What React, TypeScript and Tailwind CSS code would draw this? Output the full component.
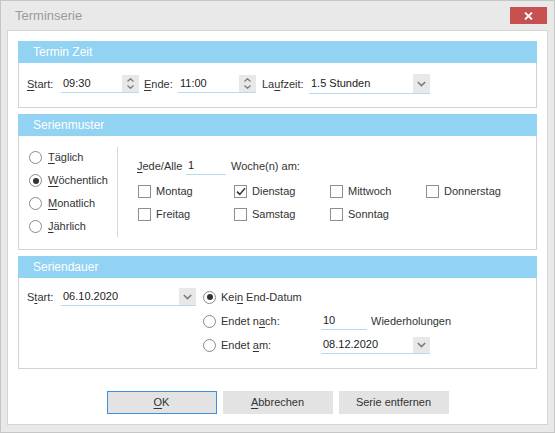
import { ReactNode } from 'react';

const font = "font-['Liberation_Sans',Arial,sans-serif]";

function Key({ children }: { children: ReactNode }) {
  return <span className="underline underline-offset-2">{children}</span>;
}

function SpinUpDown() {
  return (
    <div className="w-[17px] h-full bg-[#e8e8e8] flex flex-col items-center justify-center gap-[3px]">
      <svg width="7" height="4" viewBox="0 0 7 4">
        <path d="M0.5 3.5 L3.5 0.7 L6.5 3.5" fill="none" stroke="#7a7a7a" strokeWidth="1.2" />
      </svg>
      <svg width="7" height="4" viewBox="0 0 7 4">
        <path d="M0.5 0.5 L3.5 3.3 L6.5 0.5" fill="none" stroke="#7a7a7a" strokeWidth="1.2" />
      </svg>
    </div>
  );
}

function DropArrow() {
  return (
    <div className="w-[17px] h-full bg-[#e8e8e8] flex items-center justify-center">
      <svg width="9" height="6" viewBox="0 0 9 6">
        <path d="M0.8 1 L4.5 4.6 L8.2 1" fill="none" stroke="#7a7a7a" strokeWidth="1.5" />
      </svg>
    </div>
  );
}

function Field({ value, width, height = 'h-[18px]', right }: { value: string; width: string; height?: string; right?: ReactNode }) {
  return (
    <div className={`${width} ${height} flex items-stretch border-b border-[#b5dbef]`}>
      <span className="flex-1 pl-[2px] flex items-center text-[#222]">{value}</span>
      {right}
    </div>
  );
}

function Radio({ checked }: { checked?: boolean }) {
  return (
    <span className="w-[13px] h-[13px] rounded-full border border-[#8a8a8a] bg-white flex items-center justify-center shrink-0">
      {checked && <span className="w-[6px] h-[6px] rounded-full bg-[#333]" />}
    </span>
  );
}

function Check({ checked, label }: { checked?: boolean; label: string }) {
  return (
    <div className="h-[23px] flex items-center gap-[5px]">
      <span className="w-[13px] h-[13px] border border-[#8f8f8f] bg-white flex items-center justify-center shrink-0">
        {checked && (
          <svg width="10" height="9" viewBox="0 0 10 9">
            <path d="M1 4.6 L3.8 7.4 L9 1.2" fill="none" stroke="#333" strokeWidth="1.5" />
          </svg>
        )}
      </span>
      <span>{label}</span>
    </div>
  );
}

function Group({ title, height, children }: { title: string; height: string; children: ReactNode }) {
  return (
    <div className={`${height} border border-[#d3d3d3] flex flex-col`}>
      <div className="-mx-px -mt-px h-[22px] bg-[#92d2f2] text-white text-[12px] pl-[15px] flex items-center">{title}</div>
      <div className="flex-1">{children}</div>
    </div>
  );
}

function Button({ children, primary }: { children: ReactNode; primary?: boolean }) {
  return (
    <div
      className={`w-[110px] h-[23px] flex items-center justify-center bg-[#e3e3e3] border ${
        primary ? 'border-[#3c8fe3]' : 'border-[#e3e3e3]'
      }`}
    >
      {children}
    </div>
  );
}

export default function App() {
  const radios = [
    { key: 'T', rest: 'äglich' },
    { key: 'W', rest: 'öchentlich', checked: true },
    { key: 'M', rest: 'onatlich' },
    { key: 'J', rest: 'ährlich' },
  ];

  return (
    <div className={`w-[555px] h-[433px] bg-[#e9e9e9] border border-[#c6c6c6] flex flex-col text-[11px] text-[#333] ${font}`}>
      {/* title bar */}
      <div className="h-[29px] flex items-center justify-between pl-[14px] pr-[7px]">
        <span className="text-[13px] text-[#9a9a9a]">Terminserie</span>
        <div className="w-[37px] h-[17px] bg-[#c75050] flex items-center justify-center">
          <svg width="9" height="8" viewBox="0 0 9 8">
            <path d="M1 0.5 L8 7.5 M8 0.5 L1 7.5" stroke="white" strokeWidth="1.8" />
          </svg>
        </div>
      </div>

      {/* client */}
      <div className="mx-[6px] mb-[7px] flex-1 bg-white border border-[#d4d4d4] px-[10px] pt-[10px] flex flex-col">
        <Group title="Termin Zeit" height="h-[67px]">
          <div className="pt-[11px] pl-[8px] flex items-center">
            <span className="w-[34px]">
              <Key>S</Key>tart:
            </span>
            <Field value="09:30" width="w-[78px]" right={<SpinUpDown />} />
            <span className="w-[34px] ml-[5px]">
              <Key>E</Key>nde:
            </span>
            <Field value="11:00" width="w-[78px]" right={<SpinUpDown />} />
            <span className="w-[47px] ml-[6px]">
              La<Key>u</Key>fzeit:
            </span>
            <Field value="1.5 Stunden" width="w-[121px]" height="h-[20px]" right={<DropArrow />} />
          </div>
        </Group>

        <div className="mt-[6px]">
          <Group title="Serienmuster" height="h-[136px]">
            <div className="flex">
              <div className="w-[98px] pl-[10px] pt-[10px]">
                {radios.map((r) => (
                  <div key={r.rest} className="h-[23px] flex items-center gap-[6px]">
                    <Radio checked={r.checked} />
                    <span>
                      <Key>{r.key}</Key>
                      {r.rest}
                    </span>
                  </div>
                ))}
              </div>
              <div className="w-px h-[90px] mt-[11px] bg-[#d9d9d9]" />
              <div className="pl-[19px] pt-[21px]">
                <div className="flex items-center">
                  <span className="w-[49px]">
                    <Key>J</Key>ede/Alle
                  </span>
                  <Field value="1" width="w-[40px]" />
                  <span className="ml-[5px]">Woche(n) am:</span>
                </div>
                <div className="mt-[5px] ml-px grid grid-cols-[96px_96px_96px_auto]">
                  <Check label="Montag" />
                  <Check label="Dienstag" checked />
                  <Check label="Mittwoch" />
                  <Check label="Donnerstag" />
                  <Check label="Freitag" />
                  <Check label="Samstag" />
                  <Check label="Sonntag" />
                </div>
              </div>
            </div>
          </Group>
        </div>

        <div className="mt-[6px]">
          <Group title="Seriendauer" height="h-[113px]">
            <div className="flex pl-[8px] pt-[7px]">
              <div className="h-[24px] flex items-center">
                <span className="w-[34px]">
                  S<Key>t</Key>art:
                </span>
                <Field value="06.10.2020" width="w-[135px]" right={<DropArrow />} />
              </div>
              <div className="ml-[7px]">
                <div className="h-[24px] flex items-center">
                  <Radio checked />
                  <span className="ml-[5px]">
                    Kei<Key>n</Key> End-Datum
                  </span>
                </div>
                <div className="h-[24px] flex items-center">
                  <Radio />
                  <span className="ml-[5px] w-[100px]">
                    Endet n<Key>a</Key>ch:
                  </span>
                  <Field value="10" width="w-[46px]" />
                  <span className="ml-[4px]">Wiederholungen</span>
                </div>
                <div className="h-[24px] flex items-center">
                  <Radio />
                  <span className="ml-[5px] w-[100px]">
                    Endet <Key>a</Key>m:
                  </span>
                  <Field value="08.12.2020" width="w-[109px]" height="h-[17px]" right={<DropArrow />} />
                </div>
              </div>
            </div>
          </Group>
        </div>

        <div className="mt-[22px] flex justify-center gap-[6px]">
          <Button primary>
            <Key>O</Key>K
          </Button>
          <Button>
            <Key>A</Key>bbrechen
          </Button>
          <Button>Serie entfernen</Button>
        </div>
      </div>
    </div>
  );
}
